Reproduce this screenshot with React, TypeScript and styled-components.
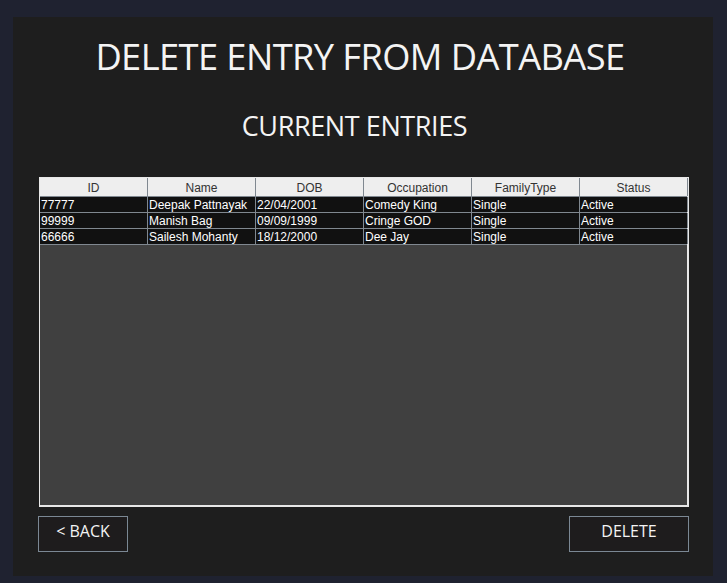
import React from "react";
import styled, { createGlobalStyle } from "styled-components";

const Global = createGlobalStyle`
  html, body { margin: 0; padding: 0; background: #1f2230; }
  body { width: 727px; height: 583px; overflow: hidden; }
`;

const Frame = styled.div`
  width: 727px;
  height: 583px;
  box-sizing: border-box;
  padding: 17px 14px 7px 13px;
  background: #1f2230;
`;

const Panel = styled.div`
  width: 700px;
  height: 559px;
  background: #1e1e1e;
  display: flex;
  flex-direction: column;
  align-items: center;
  box-sizing: border-box;
  padding: 0 24px 0 26px;
`;

const Title = styled.h1`
  margin: 17px 0 0 -8px;
  font-family: "Open Sans", "Liberation Sans", sans-serif;
  font-weight: 400;
  font-size: 37px;
  line-height: 44px;
  color: #f4f4f4;
  letter-spacing: -0.6px;
  transform: scaleX(0.98);
`;

const Subtitle = styled.h2`
  margin: 32px 0 0 -19px;
  font-family: "Open Sans", "Liberation Sans", sans-serif;
  font-weight: 400;
  font-size: 27px;
  line-height: 32px;
  color: #f4f4f4;
  letter-spacing: -0.4px;
`;

const TableBox = styled.div`
  margin-top: 35px;
  align-self: stretch;
  height: 330px;
  box-sizing: border-box;
  border: 1px solid #e8e8e8;
  border-right-width: 2px;
  border-bottom-width: 2px;
  background: #404040;
  display: flex;
  flex-direction: column;
`;

const Row = styled.div<{ $header?: boolean }>`
  display: grid;
  grid-template-columns: repeat(6, 108px);
  height: ${(p) => (p.$header ? "19px" : "16px")};
  background: ${(p) => (p.$header ? "#eeeeee" : "#111111")};
  border-bottom: 1px solid #808890;
  box-sizing: border-box;
`;

const Cell = styled.div<{ $header?: boolean }>`
  font-family: "Liberation Sans", Arial, sans-serif;
  font-size: 12px;
  line-height: ${(p) => (p.$header ? "20px" : "16px")};
  color: ${(p) => (p.$header ? "#333333" : "#ffffff")};
  text-align: ${(p) => (p.$header ? "center" : "left")};
  padding-left: ${(p) => (p.$header ? "0" : "1px")};
  border-right: 1px solid #808890;
  white-space: nowrap;
  overflow: hidden;
`;

const Footer = styled.div`
  align-self: stretch;
  display: flex;
  justify-content: space-between;
  margin-top: 9px;
  margin-left: -1px;
`;

const Button = styled.button<{ $w: number }>`
  width: ${(p) => p.$w}px;
  height: 36px;
  box-sizing: border-box;
  background: #1e1c1d;
  border: 1px solid #7b8894;
  color: #f4f4f4;
  font-family: "Open Sans", "Liberation Sans", sans-serif;
  font-size: 16px;
  line-height: 20px;
  padding: 0 0 7px 0;
  cursor: pointer;
`;

const headers = ["ID", "Name", "DOB", "Occupation", "FamilyType", "Status"];
const rows = [
  ["77777", "Deepak Pattnayak", "22/04/2001", "Comedy King", "Single", "Active"],
  ["99999", "Manish Bag", "09/09/1999", "Cringe GOD", "Single", "Active"],
  ["66666", "Sailesh Mohanty", "18/12/2000", "Dee Jay", "Single", "Active"],
];

export default function App() {
  return (
    <>
      <Global />
      <Frame>
        <Panel>
          <Title>DELETE ENTRY FROM DATABASE</Title>
          <Subtitle>CURRENT ENTRIES</Subtitle>
          <TableBox>
            <Row $header>
              {headers.map((h) => (
                <Cell $header key={h}>{h}</Cell>
              ))}
            </Row>
            {rows.map((r) => (
              <Row key={r[0]}>
                {r.map((c, i) => (
                  <Cell key={i}>{c}</Cell>
                ))}
              </Row>
            ))}
          </TableBox>
          <Footer>
            <Button $w={90}>&lt; BACK</Button>
            <Button $w={120}>DELETE</Button>
          </Footer>
        </Panel>
      </Frame>
    </>
  );
}
